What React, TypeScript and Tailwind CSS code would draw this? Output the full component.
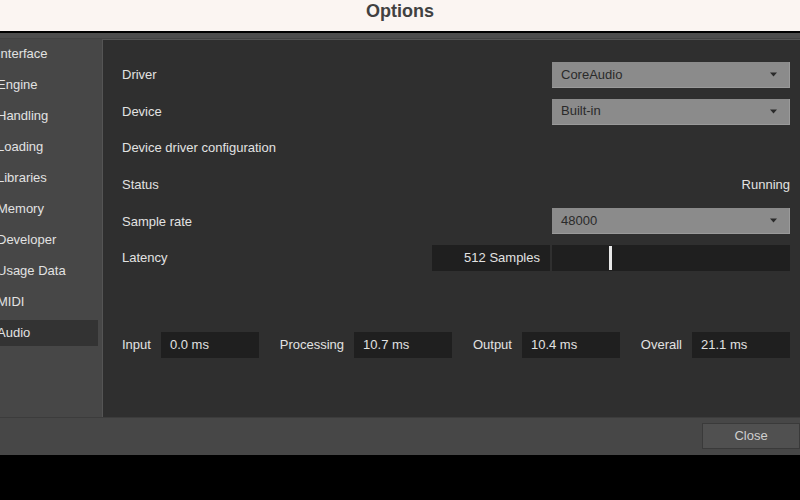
import React from 'react';

const font = { fontFamily: '"Liberation Sans", Arial, sans-serif' };

const sections = [
    'Interface',
    'Engine',
    'Handling',
    'Loading',
    'Libraries',
    'Memory',
    'Developer',
    'Usage Data',
    'MIDI',
    'Audio',
];

function Dropdown({ value }: { value: string }) {
    return (
        <div className="w-[238px] h-[26px] bg-[#8b8b8b] border-b border-r border-[#9a9a9a] flex items-center justify-between pl-[9px] pr-[12px] text-[#2a2a2a] text-[13px]">
            <span>{value}</span>
            <svg width="7" height="5" viewBox="0 0 7 5" aria-hidden="true">
                <path d="M0 0.5 H7 L3.5 4.5 Z" fill="#2a2a2a" />
            </svg>
        </div>
    );
}

function Row({ label, children }: { label: string; children?: React.ReactNode }) {
    return (
        <div className="h-[26px] flex items-center justify-between">
            <span>{label}</span>
            {children}
        </div>
    );
}

function Meter({ label, value }: { label: string; value: string }) {
    return (
        <div className="flex items-center gap-[10px]">
            <span>{label}</span>
            <div className="w-[98px] h-[26px] bg-[#1f1f1f] flex items-center pl-[9px]">{value}</div>
        </div>
    );
}

export default function App() {
    return (
        <div className="w-[800px] h-[500px] bg-black flex flex-col overflow-hidden" style={font}>
            {/* mac title bar */}
            <header className="h-[31px] bg-[#fbf5f2] flex items-center justify-center shrink-0">
                <span className="text-[18px] font-bold text-[#414141] -mt-[9px]">Options</span>
            </header>
            <div className="h-[2px] bg-black shrink-0" />

            <div className="h-[422px] bg-[#474747] flex flex-col shrink-0 text-[13px] text-[#e2e2e2]">
                <div className="h-[6px] bg-[#4d4d4d] border-b border-[#424242]" />
                <div className="flex h-[378px]">
                    {/* sidebar, labels run off the left edge as in the window */}
                    <nav className="w-[100px] flex flex-col gap-[5px] pt-[2px] pr-[2px]">
                        {sections.map((s) => (
                            <div
                                key={s}
                                className={`h-[26px] flex items-center ${s === 'Audio' ? 'bg-[#333333]' : ''}`}
                            >
                                <span className="-ml-[3px]">{s}</span>
                            </div>
                        ))}
                    </nav>

                    {/* main panel */}
                    <main className="flex-1 ml-[2px] bg-[#2f2f2f] border-l border-t border-[#555555] pl-[19px] pr-[10px] pt-[22px] flex flex-col">
                        <div className="flex flex-col gap-[10.6px]">
                            <Row label="Driver">
                                <Dropdown value="CoreAudio" />
                            </Row>
                            <Row label="Device">
                                <Dropdown value="Built-in" />
                            </Row>
                            <Row label="Device driver configuration" />
                            <Row label="Status">
                                <span>Running</span>
                            </Row>
                            <Row label="Sample rate">
                                <Dropdown value="48000" />
                            </Row>
                            <Row label="Latency">
                                <div className="flex gap-[2px]">
                                    <div className="w-[118px] h-[26px] bg-[#1f1f1f] flex items-center justify-end pr-[10px]">
                                        512 Samples
                                    </div>
                                    <div className="w-[238px] h-[26px] bg-[#1f1f1f] flex items-center pl-[57px]">
                                        <div className="w-[3px] h-[24px] bg-[#e8e8e8]" />
                                    </div>
                                </div>
                            </Row>
                        </div>

                        <div className="mt-[61px] flex items-center justify-between">
                            <Meter label="Input" value="0.0 ms" />
                            <Meter label="Processing" value="10.7 ms" />
                            <Meter label="Output" value="10.4 ms" />
                            <Meter label="Overall" value="21.1 ms" />
                        </div>
                    </main>
                </div>

                {/* footer */}
                <footer className="flex-1 flex justify-end items-start pt-[5px] border-t border-[#3c3c3c]">
                    <button className="w-[98px] h-[26px] bg-[#505050] border border-[#3a3a3a] text-[#cfcfcf] text-[13px]">
                        Close
                    </button>
                </footer>
            </div>
        </div>
    );
}
